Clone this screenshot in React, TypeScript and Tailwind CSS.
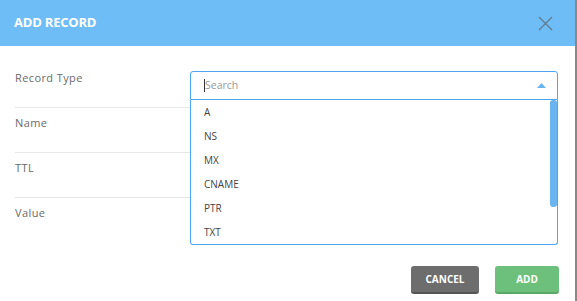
import React from 'react';

const options = ['A', 'NS', 'MX', 'CNAME', 'PTR', 'TXT'];
const labels = ['Record Type', 'Name', 'TTL', 'Value'];

const App: React.FC = () => {
  return (
    <div className="flex h-[301px] w-[577px] bg-white" style={{ fontFamily: '"Open Sans", sans-serif' }}>
      <div className="flex flex-1 flex-col">
        {/* Header */}
        <div className="flex h-[46px] items-center justify-between bg-[#6ebdf6] pl-[14px] pr-[22px]">
          <span className="text-[13px] font-bold tracking-[-0.2px] text-white">ADD RECORD</span>
          <button className="flex h-[16px] w-[16px] items-center justify-center">
            <svg width="15" height="15" viewBox="0 0 15 15" fill="none" stroke="#5f7a8f" strokeWidth="1.2">
              <path d="M1 1l13 13M14 1L1 14" />
            </svg>
          </button>
        </div>

        {/* Body */}
        <div className="relative ml-[15px] mr-[17px] pt-[17px]">
          {labels.map((label, i) => (
            <div
              key={label}
              className={`flex h-[45px] pt-[8px] ${i < labels.length - 1 ? 'border-b border-[#e6e6e6]' : ''}`}
            >
              <div className="w-[175px] text-[11px] leading-[14px] tracking-[0.4px] text-[#6a6a6a]">
                {label}
              </div>
              {i === 0 && (
                <div className="relative flex-1">
                  <div className="flex h-[29px] items-center justify-between rounded-t-[3px] border border-[#4ea5ef] pl-[13px] pr-[11px]">
                    <div className="flex items-center">
                      <span className="h-[13px] w-px bg-[#333]" />
                      <span className="text-[10.5px] text-[#999]">Search</span>
                    </div>
                    <svg width="9" height="5" viewBox="0 0 9 5">
                      <path d="M0 5L4.5 0L9 5Z" fill="#6bb5ef" />
                    </svg>
                  </div>
                  {/* Open dropdown list */}
                  <div className="absolute left-0 right-0 top-[29px] z-10 rounded-b-[3px] border border-t-0 border-[#4ea5ef] bg-white">
                    {options.map((opt) => (
                      <div key={opt} className="flex h-[24px] items-center pl-[13px] text-[10px] text-[#444]">
                        {opt}
                      </div>
                    ))}
                    <div className="absolute right-[0px] top-0 h-[107px] w-[7px] rounded-[3px] bg-[#6ab4f0]" />
                  </div>
                </div>
              )}
            </div>
          ))}
        </div>

        {/* Footer */}
        <div className="mt-[23px] flex justify-end gap-[16px] pr-[16px]">
          <button className="flex h-[28px] w-[68px] items-center justify-center rounded-[3px] border-b-2 border-[#555] bg-[#6d6d6d] text-[10px] font-bold text-white">
            CANCEL
          </button>
          <button className="flex h-[28px] w-[64px] items-center justify-center rounded-[3px] border-b-2 border-[#58a866] bg-[#6cc07b] text-[10px] font-bold text-white">
            ADD
          </button>
        </div>
      </div>
      <div className="w-[2px] bg-[#888]" />
    </div>
  );
};

export default App;
